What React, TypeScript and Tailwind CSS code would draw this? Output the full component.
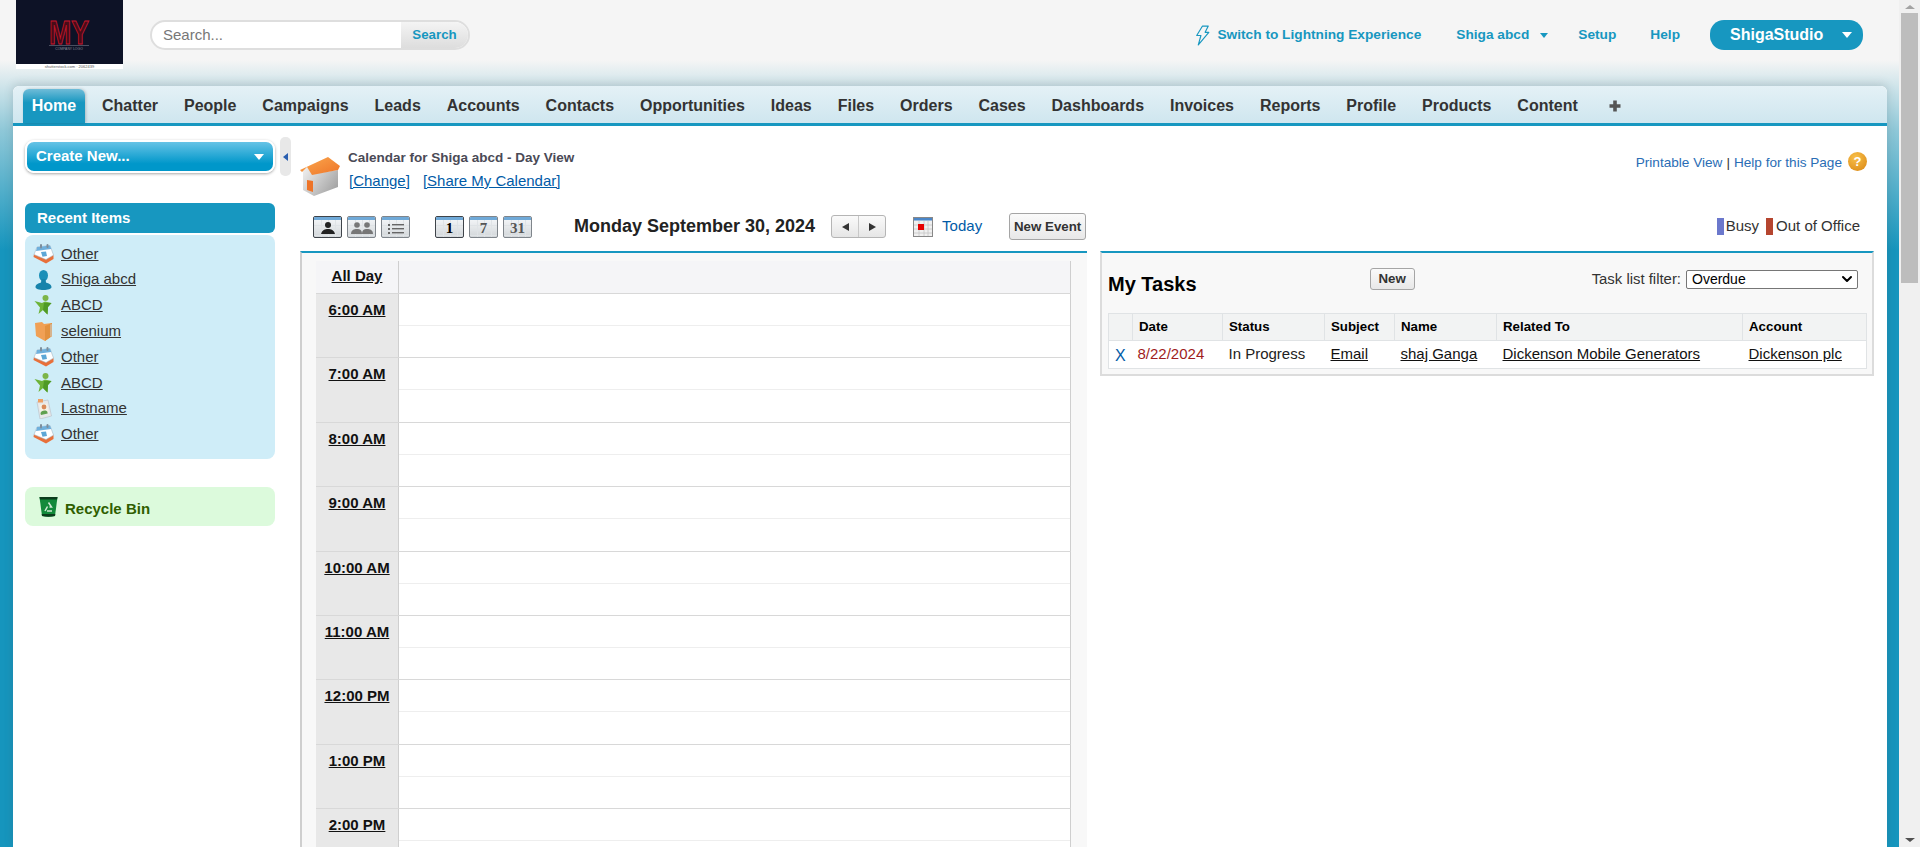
import { ChevronDown } from 'lucide-react';

const tabs = ['Chatter', 'People', 'Campaigns', 'Leads', 'Accounts', 'Contacts', 'Opportunities', 'Ideas', 'Files', 'Orders', 'Cases', 'Dashboards', 'Invoices', 'Reports', 'Profile', 'Products', 'Content'];
const hours = ['6:00 AM', '7:00 AM', '8:00 AM', '9:00 AM', '10:00 AM', '11:00 AM', '12:00 PM', '1:00 PM', '2:00 PM'];

type RecentKind = 'event' | 'user' | 'account' | 'box' | 'contact';

const recent: { label: string; kind: RecentKind }[] = [
  { label: 'Other', kind: 'event' },
  { label: 'Shiga abcd', kind: 'user' },
  { label: 'ABCD', kind: 'account' },
  { label: 'selenium', kind: 'box' },
  { label: 'Other', kind: 'event' },
  { label: 'ABCD', kind: 'account' },
  { label: 'Lastname', kind: 'contact' },
  { label: 'Other', kind: 'event' },
];

function RecentIcon({ kind }: { kind: RecentKind }) {
  if (kind === 'event') {
    return (
      <svg width="21" height="20" viewBox="0 0 21 20">
        <path d="M0.5 13 L13 19.5 L20.5 15 L20.5 11 L13 15 L1 10 Z" fill="#e8703a" />
        <path d="M4 3 L17 1.5 L20.5 11 L13 15.5 L1 10.5 Z" fill="#ffffff" stroke="#aab8c4" strokeWidth="0.6" />
        <path d="M4 3 L17 1.5 L18.3 5 L3 7 Z" fill="#6fb0dc" />
        <rect x="7" y="0" width="2" height="4.5" rx="1" fill="#7d8e9c" />
        <rect x="13.5" y="0" width="2" height="4" rx="1" fill="#7d8e9c" />
        <path d="M8 8 L13 7.5 L14 12 L9.5 12.7 Z" fill="#5da7d6" />
      </svg>
    );
  }
  if (kind === 'user') {
    return (
      <svg width="21" height="20" viewBox="0 0 21 20">
        <ellipse cx="10.5" cy="5.5" rx="4.5" ry="5.5" fill="#1a8fb8" />
        <path d="M8.5 9 L12.5 9 L13 12.5 C16 13.5 18.5 14.5 18.5 17 C18.5 19 15 20 10.5 20 C6 20 2.5 19 2.5 17 C2.5 14.5 5 13.5 8 12.5 Z" fill="#1783ab" />
      </svg>
    );
  }
  if (kind === 'account') {
    return (
      <svg width="21" height="20" viewBox="0 0 21 20">
        <circle cx="12.5" cy="3" r="3" fill="#7cb548" />
        <path d="M1.5 6 L9 8 L12 6.5 L18.5 8 L15 12 L14.5 19.5 L10 15 L5.5 19 L7 12.5 Z" fill="#6db338" />
        <path d="M11 8 L18.5 8 L15 12 L14.5 19.5 L10 15 Z" fill="#4f9a26" />
      </svg>
    );
  }
  if (kind === 'box') {
    return (
      <svg width="21" height="20" viewBox="0 0 21 20">
        <path d="M2 2 L9 1 L11 3 L19 2 L19 15 L12 20 L3 15 Z" fill="#f0a055" />
        <path d="M12 5 L19 2 L19 15 L12 20 Z" fill="#e2913f" />
        <path d="M17.5 3.5 L18.5 3 L18.5 15 L17.5 15.7 Z" fill="#c9d5de" />
      </svg>
    );
  }
  return (
    <svg width="21" height="20" viewBox="0 0 21 20">
      <path d="M4 3 L15 1 L18.5 17 L7 20 Z" fill="#e6e8ea" stroke="#b8bec4" strokeWidth="0.6" />
      <rect x="5" y="0" width="5" height="3.5" fill="#ef9f63" />
      <rect x="7" y="5" width="8" height="10" fill="#f4f1e6" transform="rotate(-10 11 10)" />
      <circle cx="11" cy="8" r="2.4" fill="#d98a5a" />
      <path d="M7.5 14.5 C7.5 11 14.5 10.5 14.5 13.5 L14.7 14.5 L8 16 Z" fill="#5fa050" />
    </svg>
  );
}

function House() {
  return (
    <svg width="40" height="39" viewBox="0 0 40 39">
      <defs>
        <linearGradient id="wall" x1="0" x2="1" y1="0" y2="0.6">
          <stop offset="0" stopColor="#f2f2f2" />
          <stop offset="1" stopColor="#a6a6a6" />
        </linearGradient>
        <linearGradient id="roof" x1="0" x2="1" y1="0" y2="1">
          <stop offset="0" stopColor="#fbaa50" />
          <stop offset="1" stopColor="#ee7428" />
        </linearGradient>
      </defs>
      <path d="M3 14 L7 10 L13 17 L38 13 L38 30 L14 39 L3 33 Z" fill="url(#wall)" />
      <path d="M0 13 L28 0 L40 9 L38 13 L12 18 L7 10 L2 15 Z" fill="url(#roof)" />
      <path d="M7 23 L13 24 L13 35 L7 33 Z" fill="#ee7428" />
    </svg>
  );
}

function ViewButton({ active, children }: { active?: boolean; children: React.ReactNode }) {
  return (
    <div className={`relative w-[29px] h-[22px] rounded-[2px] border overflow-hidden bg-[linear-gradient(#f6f8fa,#d3d7da)] ${active ? 'border-[#3f444a]' : 'border-[#7f858b]'}`}>
      <div className="h-[3px] bg-[#6fa9d8]" />
      <svg className="absolute left-0 top-[3px]" width="29" height="19" viewBox="0 0 29 19" stroke="#dfe3e6" strokeWidth="1">
        <path d="M0 5.5 H29 M0 10.5 H29 M0 15.5 H29 M7.5 0 V19 M14.5 0 V19 M21.5 0 V19" />
      </svg>
      <div className="relative flex justify-center items-center h-[17px]">{children}</div>
    </div>
  );
}

function Solo({ color }: { color: string }) {
  return (
    <svg width="18" height="14" viewBox="0 0 18 14">
      <circle cx="9" cy="4" r="3" fill={color} />
      <path d="M2 13 C3 9 6 8 9 8 C12 8 15 9 16 13 Z" fill={color} />
    </svg>
  );
}

function Pair({ color }: { color: string }) {
  return (
    <svg width="24" height="14" viewBox="0 0 24 14">
      <circle cx="7" cy="4" r="2.8" fill={color} />
      <circle cx="17" cy="4" r="2.8" fill={color} />
      <path d="M1 13 C1 9 4 8 7 8 C10 8 12 9 12 13 Z" fill={color} />
      <path d="M12 13 C12 9 14 8 17 8 C20 8 23 9 23 13 Z" fill={color} />
    </svg>
  );
}

function ListGlyph() {
  return (
    <svg width="18" height="13" viewBox="0 0 18 13" fill="#666">
      <rect x="1" y="2" width="2" height="2" />
      <rect x="1" y="6" width="2" height="2" />
      <rect x="1" y="10" width="2" height="2" />
      <rect x="5" y="2" width="12" height="1.4" />
      <rect x="5" y="6" width="12" height="1.4" />
      <rect x="5" y="10" width="12" height="1.4" />
    </svg>
  );
}

export default function App() {
  return (
    <div className="flex h-screen overflow-hidden font-['Liberation_Sans',Arial,sans-serif] text-[#333]">
      <div className="flex-1 min-w-0 bg-[linear-gradient(#f5f5f5_60px,#8fc8d8_130px,#1695bd_250px)]">
        <header className="h-[86px] flex items-start">
          <div className="ml-[16px] w-[107px] h-[69px] bg-white shrink-0">
            <svg width="107" height="64" viewBox="0 0 107 64" className="block">
              <rect width="107" height="64" fill="#0d1226" />
              <text x="53" y="44" textAnchor="middle" fontSize="33" textLength="40" lengthAdjust="spacingAndGlyphs" fontWeight="700" fontFamily="Liberation Sans, sans-serif" fill="#4a0c18" stroke="#c4162a" strokeWidth="1">MY</text>
              <rect x="33" y="45" width="40" height="0.8" fill="#5b5f70" />
              <text x="53" y="50" textAnchor="middle" fontSize="3.4" fill="#8b8f9c" fontFamily="Liberation Sans, sans-serif">COMPANY LOGO</text>
            </svg>
            <div className="text-[4px] leading-[5px] text-center text-[#555]">shutterstock.com · 2062439</div>
          </div>
          <div className="ml-[27px] mt-[20px] w-[320px] h-[30px] flex rounded-full border-2 border-[#dedede] bg-white overflow-hidden">
            <div className="flex-1 pl-[11px] text-[15px] leading-[26px] text-[#777]">Search...</div>
            <div className="w-[67px] bg-[linear-gradient(#f4f4f4,#dddddd)] text-[#1797c0] font-bold text-[13.3px] leading-[26px] text-center">Search</div>
          </div>
          <div className="ml-auto mt-[20px] h-[30px] mr-[36px] flex items-center text-[#1797c0] font-bold text-[13.7px]">
            <svg width="15" height="21" viewBox="0 0 14 20" fill="none" stroke="#1797c0" strokeWidth="1.1" strokeLinejoin="round">
              <path d="M7 1 L12.5 1 L9.5 7 L13 7 L3 19 L5.5 10 L1.5 10 Z" />
            </svg>
            <span className="ml-[7px]">Switch to Lightning Experience</span>
            <span className="ml-[35px]">Shiga abcd</span>
            <span className="ml-[11px] w-0 h-0 border-x-[4px] border-x-transparent border-t-[5px] border-t-[#1797c0]" />
            <span className="ml-[30px]">Setup</span>
            <span className="ml-[34px]">Help</span>
            <div className="ml-[30px] w-[153px] h-[30px] rounded-[14px] bg-[#1797c0] text-white flex items-center pl-[20px] text-[16px]">
              ShigaStudio
              <span className="ml-[19px] w-0 h-0 border-x-[5px] border-x-transparent border-t-[6px] border-t-white" />
            </div>
          </div>
        </header>

        <div className="ml-[13px] mr-[12px] bg-white rounded-t-[6px] shadow-[0_-2px_10px_rgba(60,70,80,0.2)] h-[calc(100vh-86px)] overflow-hidden">
          <nav className="h-[40px] flex items-end pl-[10px] rounded-t-[6px] border-b-[3px] border-[#1797c0] bg-[linear-gradient(#e4f1f6,#cfe6ef)]">
            <div className="w-[62px] h-[34px] rounded-t-[6px] bg-[linear-gradient(#6fbcd8,#1797c0_40%)] text-white font-bold text-[16px] leading-[34px] text-center shadow-[1px_0_3px_rgba(0,0,0,0.2)]">Home</div>
            <div className="flex items-center gap-[25.95px] ml-[17px] h-[34px] font-bold text-[16px] text-[#333]">
              {tabs.map((t) => (
                <span key={t}>{t}</span>
              ))}
              <svg className="ml-[5px]" width="12" height="12" viewBox="0 0 12 12" fill="#555">
                <path d="M4.2 0.5 H7.8 V4.2 H11.5 V7.8 H7.8 V11.5 H4.2 V7.8 H0.5 V4.2 H4.2 Z" />
              </svg>
            </div>
          </nav>

          <div className="flex">
            <aside className="flex shrink-0 pl-[12px]">
              <div className="w-[250px]">
                <div className="mt-[14px] h-[33px] rounded-[9px] border-2 border-white shadow-[0_1px_3px_rgba(0,0,0,0.35)] bg-[linear-gradient(#66c3e6,#0097ca_75%)] flex items-center justify-between pl-[9px] pr-[9px] text-white font-bold text-[15px]">
                  Create New...
                  <span className="w-0 h-0 border-x-[5px] border-x-transparent border-t-[6px] border-t-white" />
                </div>
                <div className="mt-[30px] h-[30px] rounded-[6px] bg-[#1797c0] text-white font-bold text-[15px] leading-[30px] pl-[12px]">Recent Items</div>
                <div className="mt-[2px] h-[224px] rounded-[8px] bg-[#cfedf8] pt-[6px] pl-[8px]">
                  {recent.map((r, i) => (
                    <div key={i} className="h-[25.8px] flex items-center gap-[7px] text-[15px]">
                      <RecentIcon kind={r.kind} />
                      <a className="underline">{r.label}</a>
                    </div>
                  ))}
                </div>
                <div className="mt-[28px] h-[39px] rounded-[8px] bg-[#dcfadc] flex items-center gap-[7px] pl-[14px] font-bold text-[15px] text-[#2f5f00]">
                  <svg width="19" height="21" viewBox="0 0 19 21">
                    <path d="M0.5 1 H18.5 L16 20 C12 21 7 21 3 20 Z" fill="#128a3a" />
                    <path d="M0.5 1 H18.5 L18 3.5 H1 Z" fill="#0b3d1c" />
                    <path d="M3 20 C7 21 12 21 16 20 L16.3 18 H2.7 Z" fill="#0b3d1c" />
                    <path d="M9.5 6.5 L12.5 11 L10.5 11 M6 15 L8.5 10.5 M13 15 H8" fill="none" stroke="#cfe8d4" strokeWidth="1.5" />
                  </svg>
                  <span className="mt-[5px]">Recycle Bin</span>
                </div>
              </div>
              <div className="ml-[5px] mt-[11px] w-[11px] h-[39px] rounded-[5px] bg-[#e8e8e8] flex items-center justify-center">
                <span className="w-0 h-0 border-y-[4px] border-y-transparent border-r-[5px] border-r-[#2a5fb0]" />
              </div>
            </aside>

            <main className="ml-[9px] w-[1574px] shrink-0 pt-[24px]">
              <div className="h-[39px] flex items-start justify-between">
                <div className="flex gap-[8px]">
                  <div className="mt-[7px]"><House /></div>
                  <div>
                    <div className="text-[13.5px] leading-[16px] font-bold text-[#4a4a56]">Calendar for Shiga abcd - Day View</div>
                    <div className="mt-[7px] text-[15px] leading-[16px] text-[#015ba7] flex gap-[13px] pl-[1px]">
                      <a className="underline">[Change]</a>
                      <a className="underline">[Share My Calendar]</a>
                    </div>
                  </div>
                </div>
                <div className="flex items-center mt-[3px] mr-[7px] text-[13.6px] text-[#2a6db5]">
                  <span>Printable View</span>
                  <span className="mx-[4px] text-[#333]">|</span>
                  <span>Help for this Page</span>
                  <span className="ml-[6px] -mt-[3px] w-[19px] h-[19px] rounded-full bg-[radial-gradient(circle_at_40%_30%,#f8c04a,#d98512)] text-white font-bold text-[13px] leading-[19px] text-center">?</span>
                </div>
              </div>

              <div className="mt-[24px] h-[27px] flex items-center pl-[13px] pr-[14px]">
                <div className="flex gap-[5px]">
                  <ViewButton active><Solo color="#222" /></ViewButton>
                  <ViewButton><Pair color="#777" /></ViewButton>
                  <ViewButton><ListGlyph /></ViewButton>
                </div>
                <div className="ml-[25px] flex gap-[5px] font-['Liberation_Serif',serif] font-bold text-[15px]">
                  <ViewButton active><span className="text-black">1</span></ViewButton>
                  <ViewButton><span className="text-[#555]">7</span></ViewButton>
                  <ViewButton><span className="text-[#555]">31</span></ViewButton>
                </div>
                <h1 className="ml-[42px] font-bold text-[18px] text-[#222]">Monday September 30, 2024</h1>
                <div className="ml-[16px] w-[55px] h-[23px] flex rounded-[3px] border border-[#b5b5b5] bg-[linear-gradient(#fafafa,#e6e6e6)]">
                  <div className="flex-1 flex items-center justify-center border-r border-[#c8c8c8]">
                    <span className="w-0 h-0 border-y-[4px] border-y-transparent border-r-[7px] border-r-[#333]" />
                  </div>
                  <div className="flex-1 flex items-center justify-center">
                    <span className="w-0 h-0 border-y-[4px] border-y-transparent border-l-[7px] border-l-[#333]" />
                  </div>
                </div>
                <svg className="ml-[27px]" width="20" height="20" viewBox="0 0 20 20">
                  <rect x="0.5" y="0.5" width="19" height="19" fill="#f0f0f0" stroke="#888" />
                  <rect x="1" y="1" width="18" height="2.5" fill="#4a86c8" />
                  <path d="M1 8 H19 M1 12 H19 M1 16 H19 M6 4 V19 M11 4 V19 M15 4 V19" stroke="#c4c4c4" strokeWidth="0.8" />
                  <rect x="5" y="7" width="6" height="6" fill="#e60000" />
                </svg>
                <span className="ml-[9px] text-[15px] text-[#015ba7]">Today</span>
                <button className="ml-[27px] w-[77px] h-[27px] rounded-[3px] border border-[#a5a5a5] bg-[linear-gradient(#fafafa,#e8e8e8)] font-bold text-[13.3px] text-[#333]">New Event</button>
                <div className="ml-auto flex items-center text-[15px] text-[#333]">
                  <span className="w-[7px] h-[17px] bg-[#6b78cc]" />
                  <span className="ml-[2px]">Busy</span>
                  <span className="ml-[7px] w-[7px] h-[17px] bg-[#b5452f]" />
                  <span className="ml-[3px]">Out of Office</span>
                </div>
              </div>

              <div className="mt-[11px] flex items-start">
                <section className="w-[787px] shrink-0 border-t-2 border-t-[#1797c0] border-l-2 border-l-[#cfcfcf] bg-[#f8f8f8] pl-[14px] pr-[16px] pt-[8px]">
                  <div className="flex h-[33px] bg-[#f5f5f7] border-b border-[#d8d8d8] border-r border-r-[#cfcfcf]">
                    <div className="w-[83px] border-r border-[#cfcfcf] text-center font-bold text-[15px] leading-[30px] text-[#111] underline">All Day</div>
                  </div>
                  {hours.map((h) => (
                    <div key={h} className="flex h-[64.4px] border-b border-[#d8d8d8] border-r border-r-[#cfcfcf]">
                      <div className="w-[83px] shrink-0 border-r border-[#cfcfcf] bg-[#e8e8e8] text-center font-bold text-[15px] leading-[32px] text-[#111] underline">{h}</div>
                      <div className="flex-1 bg-white">
                        <div className="h-[32px] border-b border-[#eeeeee]" />
                      </div>
                    </div>
                  ))}
                </section>

                <section className="ml-[13px] w-[774px] shrink-0 h-[125px] border-t-2 border-t-[#1797c0] border-x-2 border-b-2 border-x-[#dcdcdc] border-b-[#dcdcdc] bg-[#f8f8f8] pl-[6px] pr-[6px]">
                  <div className="h-[60px] flex items-start">
                    <h2 className="mt-[19px] font-bold text-[20px] leading-[24px] text-black">My Tasks</h2>
                    <button className="ml-[173px] mt-[15px] w-[45px] h-[22px] rounded-[3px] border border-[#a5a5a5] bg-[linear-gradient(#fafafa,#e8e8e8)] font-bold text-[13.3px] leading-[20px] text-[#333]">New</button>
                    <span className="ml-auto mt-[15px] text-[14.9px] leading-[22px] text-[#333]">Task list filter:</span>
                    <div className="relative ml-[5px] mr-[8px] mt-[17px] w-[172px] h-[19px] rounded-[2px] border border-[#767676] bg-white text-[14px] leading-[17px] pl-[5px] text-black">
                      Overdue
                      <ChevronDown className="absolute right-[2px] top-[0px] w-[16px] h-[16px]" strokeWidth={3} />
                    </div>
                  </div>
                  <table className="w-[758px] table-fixed border border-[#e0e3e5] bg-white">
                    <colgroup>
                      <col className="w-[24px]" />
                      <col className="w-[90px]" />
                      <col className="w-[102px]" />
                      <col className="w-[70px]" />
                      <col className="w-[102px]" />
                      <col className="w-[246px]" />
                      <col className="w-[124px]" />
                    </colgroup>
                    <thead>
                      <tr className="h-[27px] bg-[#f2f3f3] border-b border-[#e0e3e5] text-left text-[13.3px] font-bold text-black">
                        <th className="border-r border-[#e0e3e5]" />
                        <th className="pl-[6px] border-r border-[#e0e3e5]">Date</th>
                        <th className="pl-[6px] border-r border-[#e0e3e5]">Status</th>
                        <th className="pl-[6px] border-r border-[#e0e3e5]">Subject</th>
                        <th className="pl-[6px] border-r border-[#e0e3e5]">Name</th>
                        <th className="pl-[6px] border-r border-[#e0e3e5]">Related To</th>
                        <th className="pl-[6px]">Account</th>
                      </tr>
                    </thead>
                    <tbody>
                      <tr className="h-[28px] text-[15px] text-[#222]">
                        <td className="pl-[6px] pt-[2px] text-[#015ba7] text-[16px]">X</td>
                        <td className="pl-[5px] text-[#a01c1c]">8/22/2024</td>
                        <td className="pl-[6px]">In Progress</td>
                        <td className="pl-[6px]"><a className="underline text-[#111]">Email</a></td>
                        <td className="pl-[6px]"><a className="underline text-[#111]">shaj Ganga</a></td>
                        <td className="pl-[6px]"><a className="underline text-[#111]">Dickenson Mobile Generators</a></td>
                        <td className="pl-[6px]"><a className="underline text-[#111]">Dickenson plc</a></td>
                      </tr>
                    </tbody>
                  </table>
                </section>
              </div>
            </main>
          </div>
        </div>
      </div>

      <div className="w-[21px] shrink-0 bg-[#f0f0f0] flex flex-col items-center">
        <div className="mt-[5px] w-0 h-0 border-x-[5px] border-x-transparent border-b-[4px] border-b-[#a3a3a3]" />
        <div className="mt-[4px] w-[17px] h-[270px] bg-[#bdbdbd]" />
        <div className="mt-auto mb-[5px] w-0 h-0 border-x-[5px] border-x-transparent border-t-[4px] border-t-[#505050]" />
      </div>
    </div>
  );
}
